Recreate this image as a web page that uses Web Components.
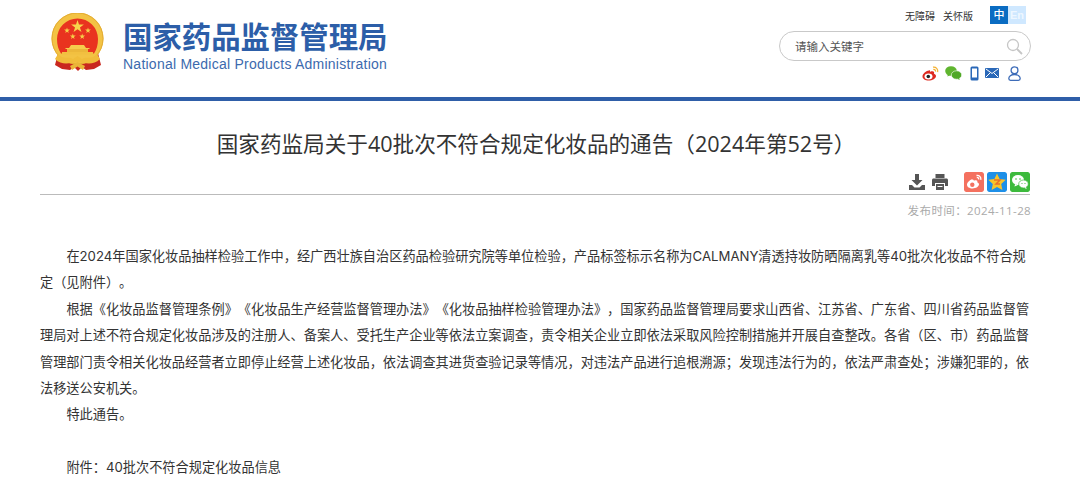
<!DOCTYPE html>
<html lang="zh-CN"><head><meta charset="utf-8">
<style>
html,body{margin:0;padding:0;background:#fff;overflow:hidden;height:500px}
body{font-family:"Open Sans","Noto Sans CJK SC","Noto Sans",sans-serif;color:#333;text-spacing-trim:space-all}
</style></head><body>
<nmpa-header></nmpa-header>
<nmpa-article>
<span slot="title">国家药监局关于40批次不符合规定化妆品的通告（2024年第52号）</span>
<span slot="date">发布时间：2024-11-28</span>
<p>在2024年国家化妆品抽样检验工作中，经广西壮族自治区药品检验研究院等单位检验，产品标签标示名称为CALMANY清透持妆防晒隔离乳等40批次化妆品不符合规定（见附件）。</p>
<p>根据《化妆品监督管理条例》《化妆品生产经营监督管理办法》《化妆品抽样检验管理办法》，国家药品监督管理局要求山西省、江苏省、广东省、四川省药品监督管理局对上述不符合规定化妆品涉及的注册人、备案人、受托生产企业等依法立案调查，责令相关企业立即依法采取风险控制措施并开展自查整改。各省（区、市）药品监督管理部门责令相关化妆品经营者立即停止经营上述化妆品，依法调查其进货查验记录等情况，对违法产品进行追根溯源；发现违法行为的，依法严肃查处；涉嫌犯罪的，依法移送公安机关。</p>
<p>特此通告。</p>
<p class="blank">&nbsp;</p>
<p>附件：40批次不符合规定化妆品信息</p>
</nmpa-article>
<script>
class NmpaEmblem extends HTMLElement{constructor(){super();this.attachShadow({mode:'open'}).innerHTML=`
<style>:host{display:block;width:56px;height:58px;flex:none}svg{display:block}</style>
<svg width="56" height="58" viewBox="0 0 56 58">
<path d="M8 40 L5 52 L12 56 L20 57 L24 54 L28 58 L32 54 L36 57 L44 56 L51 52 L48 40 Z" fill="#c9281f"/>
<circle cx="27.500" cy="25.500" r="26" fill="#f3c344"/>
<circle cx="27.500" cy="25.500" r="25.500" fill="none" stroke="#e3ab33" stroke-width="1"/>
<path d="M27.500 5.500 A20.500 20.500 0 0 1 48 26 C48 32 46.500 37 44 40.500 L11 40.500 C8.500 37 7 32 7 26 A20.500 20.500 0 0 1 27.500 5.500 Z" fill="#e9331f"/>
<path d="M27.500 7l1.500 4.600h4.900l-3.950 2.900 1.500 4.600-3.950-2.850-3.950 2.850 1.500-4.600-3.950-2.900h4.900z" fill="#f7d44c"/>
<g fill="#f6cf48"><path d="M17 14.500l.7 2.100h2.200l-1.800 1.300.7 2.100-1.800-1.300-1.800 1.300.7-2.100-1.800-1.300h2.200z"/><path d="M38 14.500l.7 2.100h2.200l-1.800 1.300.7 2.100-1.800-1.300-1.800 1.300.7-2.100-1.800-1.300h2.200z"/><path d="M22.800 20.500l.7 2.100h2.200l-1.800 1.300.7 2.100-1.800-1.300-1.800 1.300.7-2.100-1.800-1.300h2.200z"/><path d="M32.200 20.500l.7 2.100h2.200l-1.800 1.300.7 2.100-1.800-1.300-1.800 1.300.7-2.100-1.800-1.300h2.200z"/></g>
<path d="M21 32 H34 L36 35 H39 L40 36 H15 L16 35 H19 Z" fill="#f6cc4c"/><rect x="17" y="36" width="21" height="3" fill="#ecb73a"/><rect x="12" y="39" width="31" height="2.500" fill="#f2c040"/>
<path d="M8 41 C13 47 19 43 23 46 L27.500 43 L32 46 C36 43 42 47 47 41 L50 46 C43 53 35 50 27.500 49 C20 50 12 53 5 46Z" fill="#f1bd3b"/>
<path d="M20 53 L27.500 49 L35 53 L33 57 L27.500 53.500 L22 57Z" fill="#eab638"/>
</svg>`}}
customElements.define('nmpa-emblem',NmpaEmblem);

class NmpaSearch extends HTMLElement{constructor(){super();this.attachShadow({mode:'open'}).innerHTML=`
<style>:host{display:flex;align-items:center;justify-content:space-between;box-sizing:border-box;width:252px;height:30px;border:1px solid #c9c9c9;border-radius:15px;padding:0 7px 0 15px;font-size:11.500px;color:#555;background:#fff}svg{display:block}</style>
<span>请输入关键字</span>
<svg width="17" height="17" viewBox="0 0 17 17" fill="none" stroke="#c6c6c6"><circle cx="7" cy="7" r="5.500" stroke-width="1.300"/><path d="M11 11l5 5" stroke-width="1.800"/></svg>`}}
customElements.define('nmpa-search',NmpaSearch);

class NmpaLang extends HTMLElement{constructor(){super();this.attachShadow({mode:'open'}).innerHTML=`
<style>:host{display:flex;font-size:11px;line-height:18px;font-weight:500;text-align:center;color:#fff}b{font-weight:500;width:18px;height:18px;background:#0a6cc2}i{font-style:normal;width:18px;height:18px;background:#cfe8ff;color:#eef7ff;font-family:"Liberation Sans",sans-serif;font-weight:700}</style><b>中</b><i>En</i>`}}
customElements.define('nmpa-lang',NmpaLang);

class NmpaSocial extends HTMLElement{constructor(){super();this.attachShadow({mode:'open'}).innerHTML=`
<style>:host{display:flex;align-items:center;height:16px;justify-content:flex-end}svg{display:block;flex:none}</style>
<svg width="17" height="15" viewBox="0 0 17 15" style="margin-right:6px"><path d="M7 4.500C3.500 5 .5 8 .5 10.500c0 2.500 3 4 6 4 4 0 7.500-2 7.500-4.500 0-1.500-1.500-2-2-2.300.5-1.500 0-2.700-2-2.500-1 .1-1.500.5-2 .5 .2-1-.2-1.700-1-1.200z" fill="#de2a20"/><ellipse cx="6.500" cy="10.500" rx="4" ry="3" fill="#fff"/><circle cx="6.300" cy="10.500" r="1.800" fill="#222"/><path d="M11 1.200c3-.5 5.300 2 4.700 5M11.300 3.500c1.500-.3 2.500.8 2.300 2.200" fill="none" stroke="#f4b02e" stroke-width="1.200"/></svg>
<svg width="17" height="14" viewBox="0 0 17 14" style="margin-right:8px"><ellipse cx="6" cy="5" rx="5.800" ry="4.800" fill="#5fb52f"/><path d="M3 8l-.6 2.500L5.500 9z" fill="#5fb52f"/><ellipse cx="11.500" cy="9" rx="5.200" ry="4.200" fill="#4fa825" stroke="#fff" stroke-width=".6"/><path d="M14 12l.8 2-2.600-1.300z" fill="#4fa825"/></svg>
<svg width="9" height="15" viewBox="0 0 9 15" style="margin-right:6px"><rect x=".5" y=".5" width="8" height="14" rx="1.500" fill="#2a68b8"/><rect x="2" y="2.500" width="5" height="9" fill="#fff"/></svg>
<svg width="14" height="10" viewBox="0 0 14 10" style="margin-right:9px"><rect width="14" height="10" rx="1" fill="#2a68b8"/><path d="M1 1l6 4.500L13 1M1 9l4-4M13 9L9 5" fill="none" stroke="#fff" stroke-width="1"/></svg>
<svg width="13" height="15" viewBox="0 0 13 15" fill="none" stroke="#3d6cb8" stroke-width="1.300" style="margin-right:10px"><circle cx="6.500" cy="4.200" r="3.400"/><path d="M6.500 8.500C3 8.500.8 10.500.8 12.500c0 1.200.6 1.800 1.700 1.800h8c1.100 0 1.700-.6 1.700-1.800 0-2-2.200-4-5.700-4z"/></svg>`}}
customElements.define('nmpa-social',NmpaSocial);

class NmpaHeader extends HTMLElement{constructor(){super();this.attachShadow({mode:'open'}).innerHTML=`
<style>
:host{display:block;box-sizing:border-box;height:101px;border-bottom:4px solid #2f5ea8}
.row{display:flex;justify-content:space-between;height:97px;box-sizing:border-box;padding:0 49px 0 50px}
.brand{display:flex;align-items:flex-start;gap:17px;padding-top:13px}
.txt{display:flex;flex-direction:column;color:#2c5ea8;padding-top:4px}
.cn{font-family:"Noto Sans CJK SC",sans-serif;font-size:29.400px;line-height:36px;font-weight:700;white-space:nowrap}
.en{font-family:"Liberation Sans",sans-serif;font-size:14px;line-height:18px;margin-top:2px;letter-spacing:.24px;white-space:nowrap;color:#3c6aae}
.tools{display:flex;flex-direction:column;align-items:flex-end;padding-top:6px}
.top{display:flex;align-items:center;height:18px;font-size:10px;color:#333}
.top span+span{margin-left:8px}
nmpa-lang{margin:0 5px 0 17px}
nmpa-search{margin-top:7px}
nmpa-social{margin-top:4px;width:252px}
</style>
<div class="row">
<div class="brand"><nmpa-emblem></nmpa-emblem><div class="txt"><span class="cn">国家药品监督管理局</span><span class="en">National Medical Products Administration</span></div></div>
<div class="tools"><div class="top"><span>无障碍</span><span>关怀版</span><nmpa-lang></nmpa-lang></div><nmpa-search></nmpa-search><nmpa-social></nmpa-social></div>
</div>`}}
customElements.define('nmpa-header',NmpaHeader);

class NmpaShare extends HTMLElement{constructor(){super();this.attachShadow({mode:'open'}).innerHTML=`
<style>:host{display:flex;align-items:center;justify-content:flex-end;height:21px}svg{display:block;flex:none}.b{width:20px;height:20px;border-radius:2px;margin-left:3px;display:block}</style>
<svg width="16" height="16" viewBox="0 0 16 16" style="margin-right:7px" fill="#555"><path d="M6 0h4v6h3.500L8 11.500 2.500 6H6z"/><path d="M0 11h3l2.500 2.500h5L13 11h3v5H0z"/></svg>
<svg width="16" height="16" viewBox="0 0 16 16" style="margin-right:13px" fill="#555"><path d="M3.500 0h9v4h-9z"/><path d="M1.500 4.500h13c.8 0 1.500.7 1.500 1.500v6h-3V9H3v3H0V6c0-.8.7-1.500 1.500-1.500z"/><path d="M4 10h8v6H4z"/><path d="M5.500 12h5v1h-5z" fill="#fff"/></svg>
<svg class="b" viewBox="0 0 20 20"><rect width="20" height="20" rx="2" fill="#f4715f"/><path d="M8.500 7C5.500 8 3 10.500 3 12.800 3 15 5.500 16.500 8.500 16.500c3.500 0 6.500-2 6.500-4.200 0-1.200-1.200-1.800-1.800-2 .5-1.300 0-2.300-1.700-2.100-.8.100-1.500.4-1.800.4.100-.9-.3-1.300-1.200-.6z" fill="#fff"/><circle cx="8.300" cy="12.700" r="2.200" fill="#f4715f"/><path d="M12.500 3.500c2.800-.4 4.800 1.700 4.300 4.300M12.800 5.500c1.300-.2 2.200.7 2 2" fill="none" stroke="#fff" stroke-width="1.300"/></svg>
<svg class="b" viewBox="0 0 20 20"><rect width="20" height="20" rx="2" fill="#1e90e8"/><path d="M10 1.500l2.600 5.600 6.100.7-4.500 4.200 1.200 6L10 15l-5.400 3 1.200-6-4.500-4.200 6.100-.7z" fill="#f8c42a"/><path d="M7 8h6l-4 4h4" fill="none" stroke="#e8702a" stroke-width="1.500"/></svg>
<svg class="b" viewBox="0 0 20 20"><rect width="20" height="20" rx="2" fill="#3dba3d"/><ellipse cx="8" cy="8" rx="6" ry="5" fill="#fff"/><path d="M5 12l-.5 2.500L8 13z" fill="#fff"/><ellipse cx="13.500" cy="12" rx="4.800" ry="4" fill="#fff" stroke="#3dba3d" stroke-width=".7"/><path d="M16 15l.6 2-2.400-1.200z" fill="#fff"/><circle cx="6" cy="7" r=".8" fill="#3dba3d"/><circle cx="10" cy="7" r=".8" fill="#3dba3d"/><circle cx="12" cy="11.500" r=".6" fill="#3dba3d"/><circle cx="15" cy="11.500" r=".6" fill="#3dba3d"/></svg>`}}
customElements.define('nmpa-share',NmpaShare);

class NmpaArticle extends HTMLElement{constructor(){super();this.attachShadow({mode:'open'}).innerHTML=`
<style>
:host{display:block;padding:0 49.900px 0 40px}
h1{margin:0;padding:27px 0 0 2px;height:38px;line-height:32px;font-size:21.600px;font-weight:400;text-align:center;color:#333}
.bar{margin-top:5px;border-bottom:1px solid #bbb;box-sizing:border-box;height:24px}
.date{font-size:11.500px;line-height:16px;margin:8px -1px 0 0;text-align:right;color:#aaa;letter-spacing:.4px}
.body{margin-top:24px;font-family:Inter,"Noto Sans CJK SC",sans-serif;font-size:13.200px;line-height:26.400px;color:#333;text-align:left}
::slotted(p){margin:0;text-indent:2em}
</style>
<h1><slot name="title"></slot></h1>
<div class="bar"><nmpa-share></nmpa-share></div>
<div class="date"><slot name="date"></slot></div>
<div class="body"><slot></slot></div>`}}
customElements.define('nmpa-article',NmpaArticle);
</script>
</body></html>
